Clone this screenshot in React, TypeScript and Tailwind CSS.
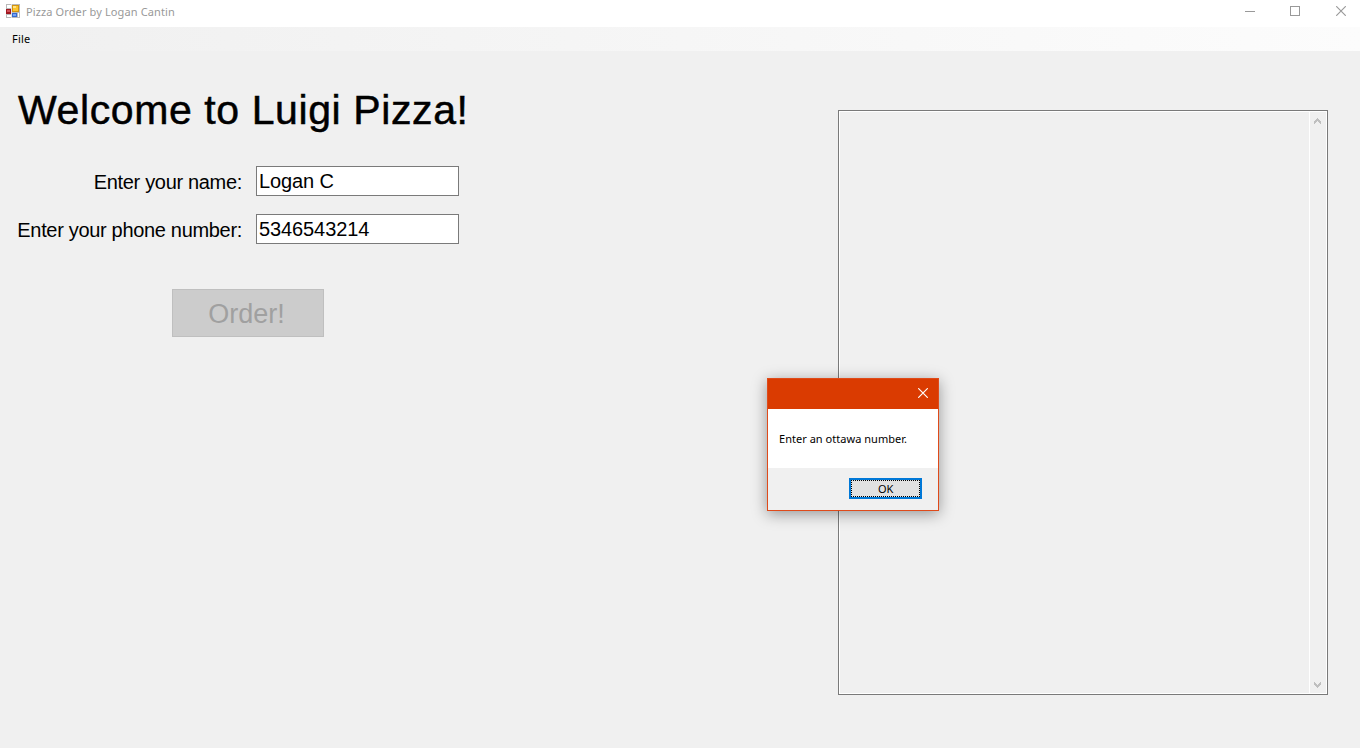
import type { ReactNode } from 'react';

function AppIcon() {
  return (
    <svg width="14" height="14" viewBox="0 0 14 14" shapeRendering="crispEdges" className="shrink-0">
      <rect width="14" height="14" fill="#b9b9b9" />
      <rect x="1" y="1" width="4" height="3" fill="#fff" />
      <rect x="1" y="11" width="4" height="2" fill="#fff" />
      <rect x="12" y="9" width="1" height="4" fill="#fff" />
      <rect x="0" y="5" width="5" height="5" fill="#a01820" />
      <rect x="1" y="6" width="3" height="2" fill="#d2505a" />
      <rect x="5" y="0" width="1" height="14" fill="#e4e4e4" />
      <rect x="6" y="1" width="7" height="7" fill="#d3940f" />
      <rect x="7" y="2" width="5" height="5" fill="#fbc52e" />
      <rect x="7" y="2" width="3" height="2" fill="#ffe387" />
      <rect x="6" y="9" width="5" height="4" fill="#3569cf" />
      <rect x="7" y="10" width="3" height="2" fill="#75a3f5" />
    </svg>
  );
}

function Cross({ className }: { className: string }) {
  return (
    <svg width="10" height="10" viewBox="0 0 10 10" className={className}>
      <path d="M0.2 0.2L9.8 9.8M9.8 0.2L0.2 9.8" fill="none" stroke="currentColor" strokeWidth="1.15" />
    </svg>
  );
}

function ScrollArrow({ down = false }: { down?: boolean }) {
  return (
    <svg width="7" height="6" viewBox="0 0 7 6" shapeRendering="crispEdges" className={down ? 'rotate-180' : ''}>
      <path
        d="M3 0h1v1h1v1h1v1h1v3h-1v-1h-1v-1h-1v-1h-1v1h-1v1h-1v1h-1v-3h1v-1h1v-1h1z"
        fill="#bfbfbf"
      />
    </svg>
  );
}

function Field({ label, children }: { label: ReactNode; children: ReactNode }) {
  return (
    <div className="flex h-[30px] w-[459px] text-[20px] leading-[30px] text-black">
      <label className="w-[242px] pt-px text-right tracking-[-0.32px] whitespace-nowrap">{label}</label>
      <div className="ml-[14px] h-[30px] w-[203px] border border-[#7a7a7a] bg-white pl-[2px] leading-[28px] tracking-[-0.1px] whitespace-nowrap">
        {children}
      </div>
    </div>
  );
}

function MessageBox() {
  return (
    <div
      role="dialog"
      className="absolute top-[378px] left-[767px] flex h-[133px] w-[172px] flex-col border border-[#df4a1a] bg-[#f0f0f0] font-['Noto_Sans',sans-serif] text-[11px] text-black shadow-[0_3px_14px_rgba(0,0,0,0.38)]"
    >
      <div className="flex h-[30px] items-start justify-end bg-[#da3b01] pt-[9px] pr-[10px]">
        <Cross className="text-white" />
      </div>
      <div className="flex h-[59px] items-center bg-white pt-[2px] pl-[11px]">
        <span className="tracking-[0.03px] whitespace-nowrap">Enter an ottawa number.</span>
      </div>
      <div className="flex justify-end pt-[10px] pr-[16px]">
        <button className="h-[21px] w-[73px] border-2 border-[#0078d7] bg-[#e1e1e1]">
          <span className="flex h-full w-full items-center justify-center border border-dotted border-black leading-none tracking-[-0.3px]">
            OK
          </span>
        </button>
      </div>
    </div>
  );
}

export default function App() {
  return (
    <div className="relative flex h-[748px] w-[1360px] flex-col overflow-hidden bg-[#f0f0f0] font-['Liberation_Sans',Arial,sans-serif]">
      <header className="flex h-[27px] items-start bg-white pl-[6px] text-[#999999]">
        <div className="flex pt-[4px]">
          <AppIcon />
        </div>
        <span className="ml-[6px] pt-[4px] font-['Noto_Sans',sans-serif] text-[11px] leading-[16px] tracking-[0.12px] whitespace-nowrap">
          Pizza Order by Logan Cantin
        </span>
        <div className="ml-auto flex items-start pt-[6px] pr-[14px]">
          <svg width="10" height="11" viewBox="0 0 10 11" shapeRendering="crispEdges" className="mr-[35px]">
            <rect y="5" width="10" height="1" fill="currentColor" />
          </svg>
          <svg width="10" height="10" viewBox="0 0 10 10" shapeRendering="crispEdges" className="mr-[36px]">
            <rect x="0.5" y="0.5" width="9" height="9" fill="none" stroke="currentColor" />
          </svg>
          <Cross className="text-[#999999]" />
        </div>
      </header>
      <nav className="flex h-[24px] bg-linear-to-r from-[#f0f0f0] to-[#fcfcfc] pl-[12px] font-['Noto_Sans',sans-serif] text-[11px] leading-[24px] tracking-[0.2px] text-black">
        <span>File</span>
      </nav>
      <main className="flex flex-1">
        <section className="w-[838px]">
          <h1 className="mt-[35px] ml-[18px] h-[48px] text-[41px] leading-[48px] tracking-[0.6px] whitespace-nowrap text-black [-webkit-text-stroke:0.5px_black]">
            Welcome to Luigi Pizza!
          </h1>
          <div className="mt-[32px] flex flex-col gap-[18px]">
            <Field label="Enter your name:">Logan C</Field>
            <Field label="Enter your phone number:">5346543214</Field>
          </div>
          <button
            disabled
            className="mt-[45px] ml-[172px] flex h-[48px] w-[152px] items-center justify-center border border-[#bfbfbf] bg-[#cccccc] pt-[2px] pr-[3px] text-[27px] leading-none text-[#a0a0a0]"
          >
            Order!
          </button>
        </section>
        <section className="mt-[59px] flex h-[585px] w-[490px] border border-[#7a7a7a]">
          <div className="flex flex-1 border border-white">
            <div className="flex-1" />
            <div className="flex w-[17px] flex-col items-center justify-between border-l border-white pt-[6px] pr-px pb-[5px]">
              <ScrollArrow />
              <ScrollArrow down />
            </div>
          </div>
        </section>
      </main>
      <MessageBox />
    </div>
  );
}
